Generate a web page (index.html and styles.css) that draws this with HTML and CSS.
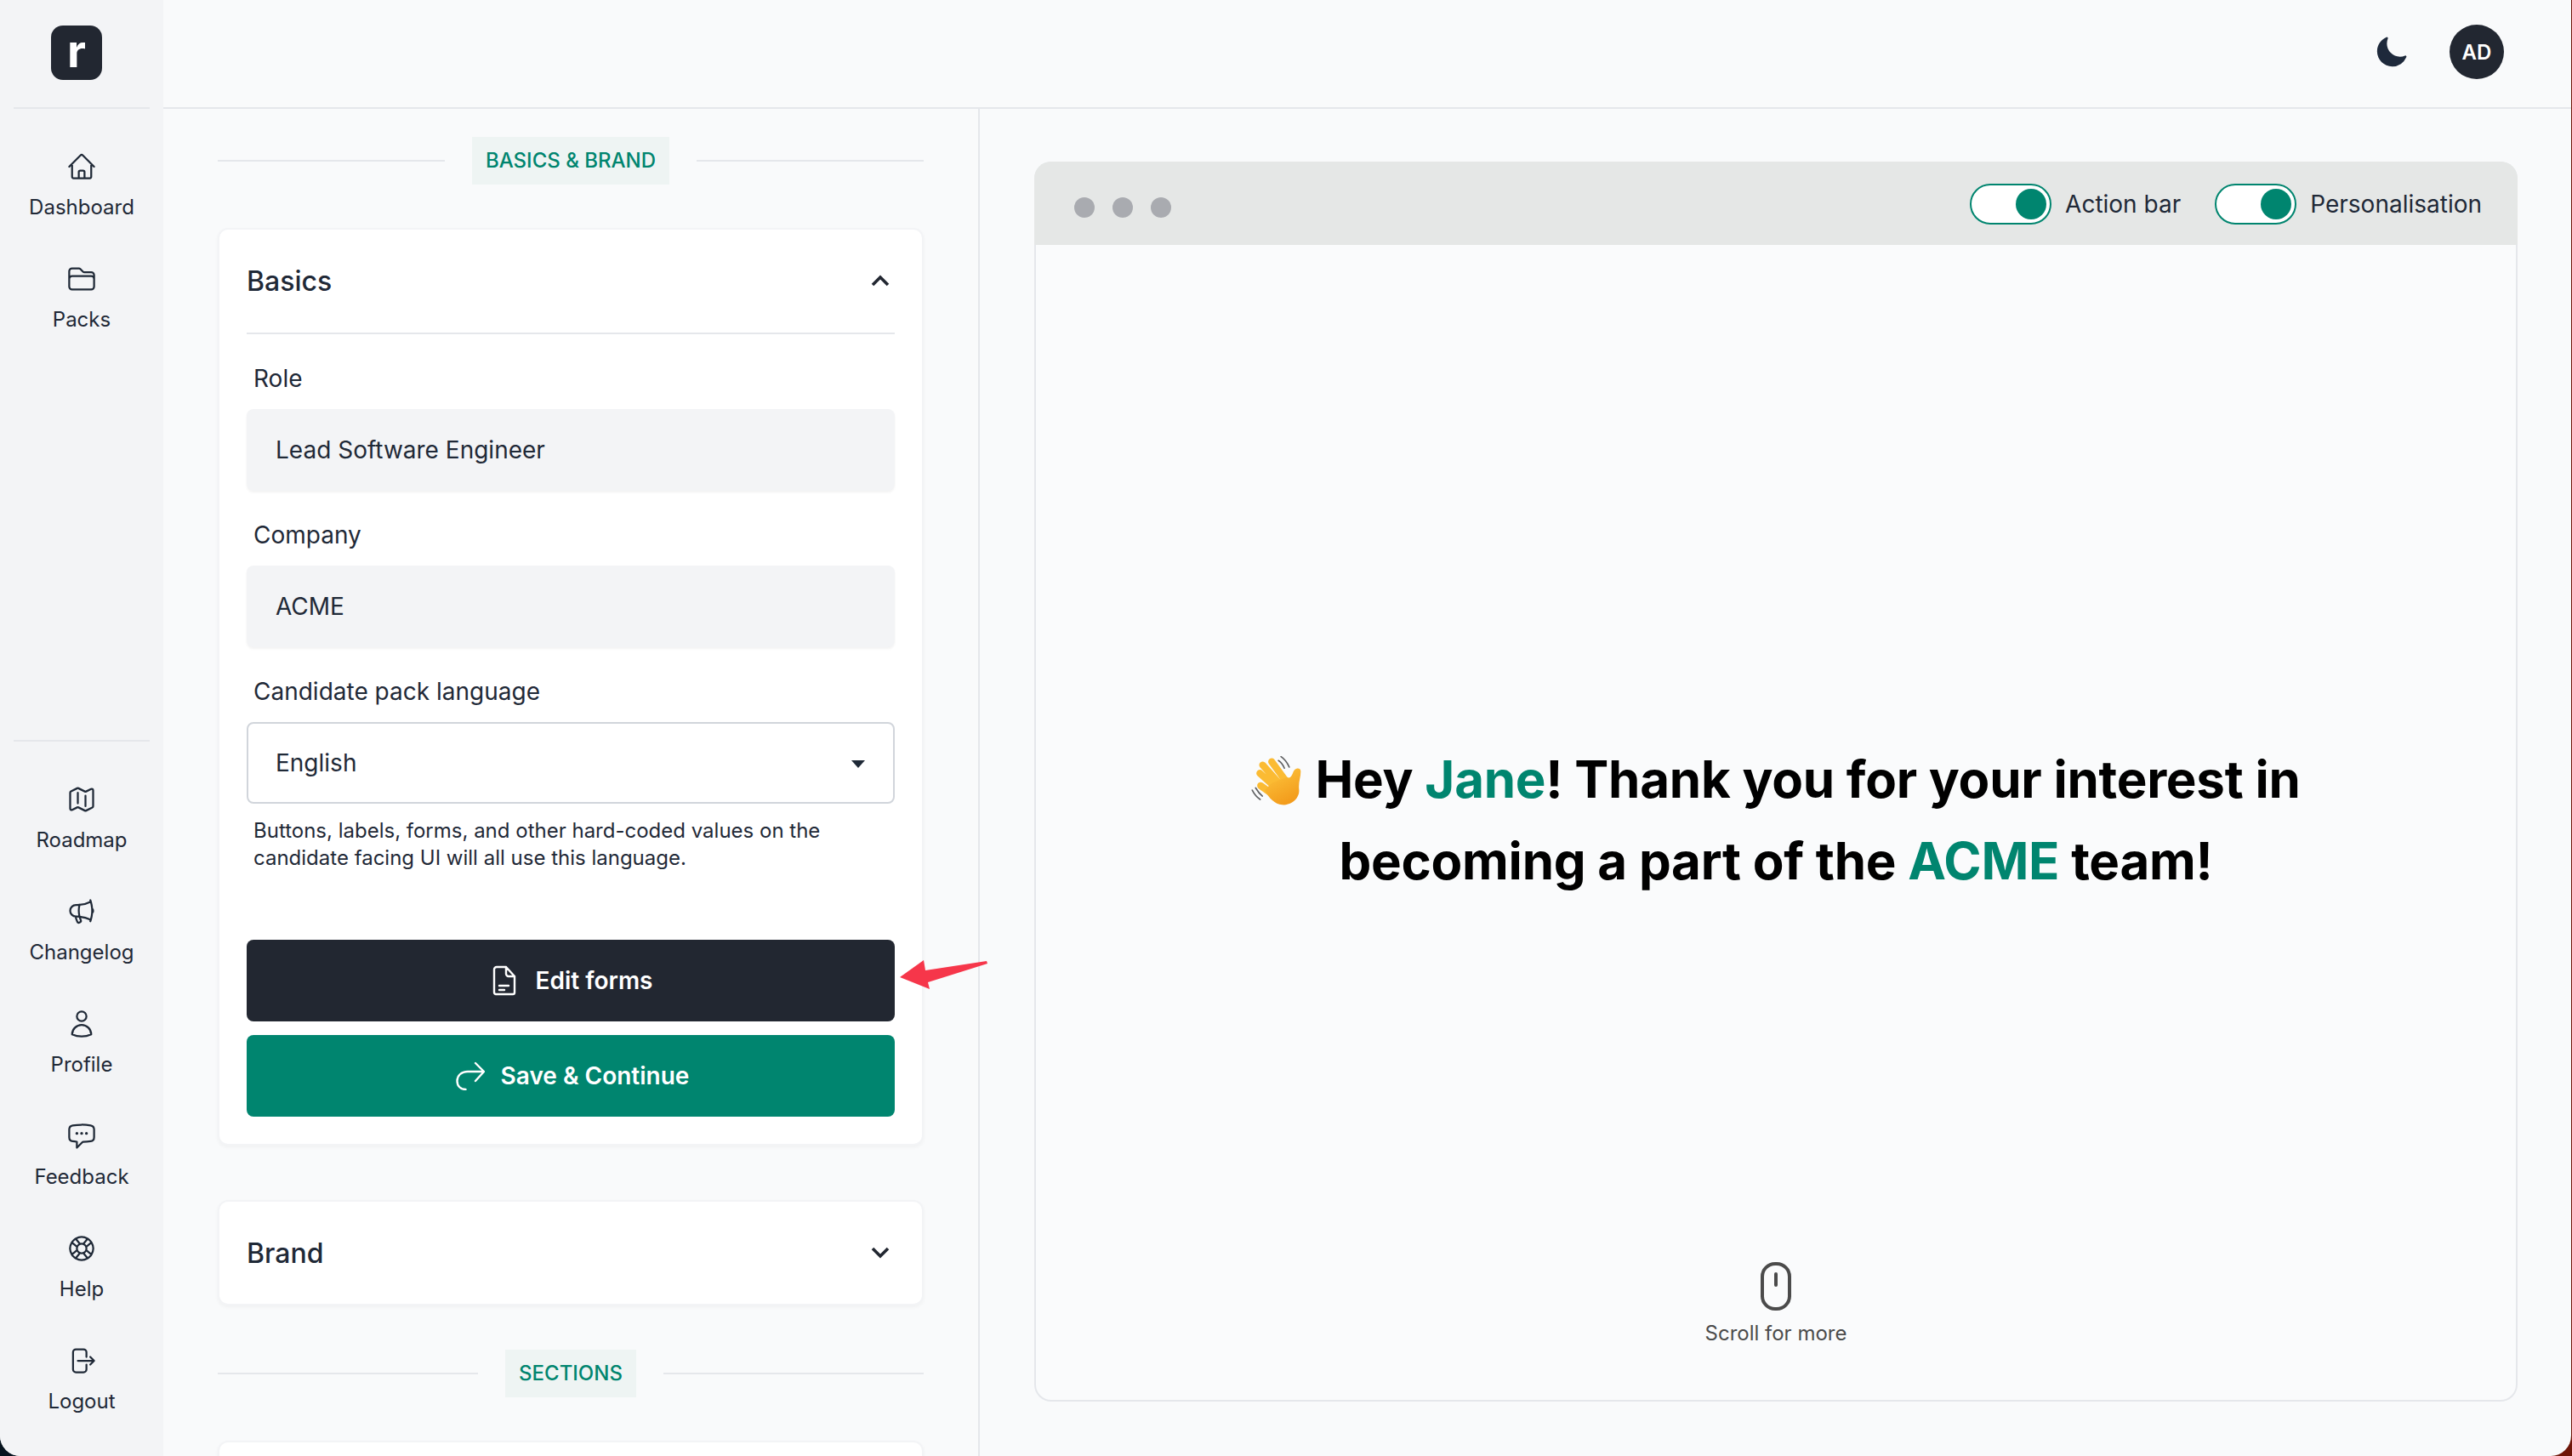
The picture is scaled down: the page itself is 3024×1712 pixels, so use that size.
FILE: index.html
```html
<!DOCTYPE html>
<html lang="en">
<head>
<meta charset="utf-8">
<title>Candidate pack</title>
<link rel="stylesheet" href="styles.css">
</head>
<body>
<div class="app">
  <aside class="sidebar">
    <div class="brand-row"><div class="logo">r</div></div>
    <nav class="nav nav-top">
      <a class="nav-item"><svg class="nav-icon" viewBox="0 0 24 24"><path d="M2.25 12l8.954-8.955c.44-.439 1.152-.439 1.591 0L21.75 12M4.5 9.75v10.125c0 .621.504 1.125 1.125 1.125H9.75v-4.875c0-.621.504-1.125 1.125-1.125h2.25c.621 0 1.125.504 1.125 1.125V21h4.125c.621 0 1.125-.504 1.125-1.125V9.75M8.25 21h8.25"/></svg><span>Dashboard</span></a>
      <a class="nav-item"><svg class="nav-icon" viewBox="0 0 24 24"><path d="M2.25 12.75V12A2.25 2.25 0 014.5 9.75h15A2.25 2.25 0 0121.75 12v.75m-8.69-6.44l-2.12-2.12a1.5 1.5 0 00-1.061-.44H4.5A2.25 2.25 0 002.25 6v12a2.25 2.25 0 002.25 2.25h15A2.25 2.25 0 0021.75 18V9a2.25 2.25 0 00-2.25-2.25h-5.379a1.5 1.5 0 01-1.06-.44z"/></svg><span>Packs</span></a>
    </nav>
    <nav class="nav nav-bottom">
      <a class="nav-item"><svg class="nav-icon" viewBox="0 0 24 24"><path d="M9 6.75V15m6-6v8.25m.503 3.498l4.875-2.437c.381-.19.622-.58.622-1.006V4.82c0-.836-.88-1.38-1.628-1.006l-3.869 1.934c-.317.159-.69.159-1.006 0L9.503 3.252a1.125 1.125 0 00-1.006 0L3.622 5.689C3.24 5.88 3 6.27 3 6.695V19.18c0 .836.88 1.38 1.628 1.006l3.869-1.934c.317-.159.69-.159 1.006 0l4.994 2.497c.317.158.69.158 1.006 0z"/></svg><span>Roadmap</span></a>
      <a class="nav-item"><svg class="nav-icon" viewBox="0 0 24 24"><path d="M10.34 15.84c-.688-.06-1.386-.09-2.09-.09H7.5a4.5 4.5 0 110-9h.75c.704 0 1.402-.03 2.09-.09m0 9.18c.253.962.584 1.892.985 2.783.247.55.06 1.21-.463 1.511l-.657.38c-.551.318-1.26.117-1.527-.461a20.845 20.845 0 01-1.44-4.282m3.102.069a18.03 18.03 0 01-.59-4.59c0-1.586.205-3.124.59-4.59m0 9.18a23.848 23.848 0 018.835 2.535M10.34 6.66a23.847 23.847 0 008.835-2.535m0 0A23.74 23.74 0 0018.795 3m.38 1.125a23.91 23.91 0 011.014 5.395m-1.014 8.855c-.118.38-.245.754-.38 1.125m.38-1.125a23.91 23.91 0 001.014-5.395m0-3.46c.495.413.811 1.035.811 1.73 0 .695-.316 1.317-.811 1.73m0-3.46a24.347 24.347 0 010 3.46"/></svg><span>Changelog</span></a>
      <a class="nav-item"><svg class="nav-icon" viewBox="0 0 24 24"><path d="M15.75 6a3.75 3.75 0 11-7.5 0 3.75 3.75 0 017.5 0zM4.501 20.118a7.5 7.5 0 0114.998 0A17.933 17.933 0 0112 21.75c-2.676 0-5.216-.584-7.499-1.632z"/></svg><span>Profile</span></a>
      <a class="nav-item"><svg class="nav-icon" viewBox="0 0 24 24"><path d="M8.625 9.75a.375.375 0 11-.75 0 .375.375 0 01.75 0zm0 0H8.25m4.125 0a.375.375 0 11-.75 0 .375.375 0 01.75 0zm0 0H12m4.125 0a.375.375 0 11-.75 0 .375.375 0 01.75 0zm0 0h-.375m-13.5 3.01c0 1.6 1.123 2.994 2.707 3.227 1.087.16 2.185.283 3.293.369V21l4.184-4.183a1.14 1.14 0 01.778-.332 48.294 48.294 0 005.83-.498c1.585-.233 2.708-1.626 2.708-3.228V6.741c0-1.602-1.123-2.995-2.707-3.228A48.394 48.394 0 0012 3c-2.392 0-4.744.175-7.043.513C3.373 3.746 2.25 5.14 2.25 6.741v6.018z"/></svg><span>Feedback</span></a>
      <a class="nav-item"><svg class="nav-icon" viewBox="0 0 24 24"><path d="M16.712 4.33a9.027 9.027 0 011.652 1.306c.51.51.944 1.064 1.306 1.652M16.712 4.33l-3.448 4.138m3.448-4.138a9.014 9.014 0 00-9.424 0M19.67 7.288l-4.138 3.448m4.138-3.448a9.014 9.014 0 010 9.424m-4.138-5.976a3.736 3.736 0 00-.88-1.388 3.737 3.737 0 00-1.388-.88m2.268 2.268a3.765 3.765 0 010 2.528m-2.268-4.796a3.765 3.765 0 00-2.528 0m4.796 4.796c-.181.506-.475.982-.88 1.388a3.736 3.736 0 01-1.388.88m2.268-2.268l4.138 3.448m0 0a9.027 9.027 0 01-1.306 1.652c-.51.51-1.064.944-1.652 1.306m0 0l-3.448-4.138m3.448 4.138a9.014 9.014 0 01-9.424 0m5.976-4.138a3.765 3.765 0 01-2.528 0m0 0a3.736 3.736 0 01-1.388-.88 3.737 3.737 0 01-.88-1.388m2.268 2.268L7.288 19.67m0 0a9.024 9.024 0 01-1.652-1.306 9.027 9.027 0 01-1.306-1.652m0 0l4.138-3.448M4.33 16.712a9.014 9.014 0 010-9.424m4.138 5.976a3.765 3.765 0 010-2.528m0 0c.181-.506.475-.982.88-1.388a3.736 3.736 0 011.388-.88m-2.268 2.268L4.33 7.288m6.406 1.18L7.288 4.33m0 0a9.024 9.024 0 00-1.652 1.306A9.025 9.025 0 004.33 7.288"/></svg><span>Help</span></a>
      <a class="nav-item"><svg class="nav-icon" viewBox="0 0 24 24"><path d="M15.75 9V5.25A2.25 2.25 0 0013.5 3h-6a2.25 2.25 0 00-2.25 2.25v13.5A2.25 2.25 0 007.5 21h6a2.25 2.25 0 002.25-2.25V15m3 0l3-3m0 0l-3-3m3 3H9"/></svg><span>Logout</span></a>
    </nav>
  </aside>

  <div class="main">
    <header class="topbar">
      <svg class="moon" viewBox="0 0 24 24"><path d="M9.528 1.718a.75.75 0 01.162.819A8.97 8.97 0 009 6a9 9 0 009 9 8.97 8.97 0 003.463-.69.75.75 0 01.981.98 10.503 10.503 0 01-9.694 6.46c-5.799 0-10.5-4.701-10.5-10.5 0-4.368 2.667-8.112 6.46-9.694a.75.75 0 01.818.162z"/></svg>
      <div class="avatar">AD</div>
    </header>

    <div class="split">
      <section class="editor">
        <div class="section-title"><span class="section-line"></span><span class="section-pill">BASICS &amp; BRAND</span><span class="section-line"></span></div>

        <div class="card">
          <div class="card-head">
            <h2>Basics</h2>
            <svg class="chevron" viewBox="0 0 24 14"><path d="M3 12L12 3l9 9"/></svg>
          </div>
          <div class="card-body">
            <div class="field">
              <div class="field-label">Role</div>
              <div class="input">Lead Software Engineer</div>
            </div>
            <div class="field">
              <div class="field-label">Company</div>
              <div class="input">ACME</div>
            </div>
            <div class="field field-select">
              <div class="field-label">Candidate pack language</div>
              <div class="select">English<span class="select-caret"></span></div>
              <p class="help">Buttons, labels, forms, and other hard-coded values on the candidate facing UI will all use this language.</p>
            </div>
            <div class="actions">
              <button class="btn btn-dark">
                <svg class="btn-icon-doc" viewBox="0 0 28 36"><path d="M5 2h11l10 11v19a2 2 0 01-2 2H4a2 2 0 01-2-2V5a3 3 0 013-3zM16 2v8a3 3 0 003 3h7M8 24h11M8 29h6"/></svg>
                <span>Edit forms</span>
              </button>
              <div class="annotation">
                <svg class="arrow" viewBox="0 0 104 34"><path d="M0 20L28 0l2 12 72-11 1 3-70 22 2 8z"/></svg>
              </div>
              <button class="btn btn-teal">
                <svg class="btn-icon-share" viewBox="0 0 34 34"><path d="M32 12H14C6 12 1.500 17 1.500 23c0 6 4 10 10 10M23 2l10 10-10 11"/></svg>
                <span>Save &amp; Continue</span>
              </button>
            </div>
          </div>
        </div>

        <div class="card card-brand">
          <div class="card-head">
            <h2>Brand</h2>
            <svg class="chevron" viewBox="0 0 24 14"><path d="M3 2l9 9 9-9"/></svg>
          </div>
        </div>

        <div class="section-title section-title-next"><span class="section-line"></span><span class="section-pill">SECTIONS</span><span class="section-line"></span></div>
        <div class="card card-stub"></div>
      </section>

      <section class="preview">
        <div class="browser">
          <div class="browser-bar">
            <div class="dots"><span class="dot"></span><span class="dot"></span><span class="dot"></span></div>
            <div class="toggles">
              <div class="toggle-row"><span class="toggle"><span class="knob"></span></span><span>Action bar</span></div>
              <div class="toggle-row"><span class="toggle"><span class="knob"></span></span><span>Personalisation</span></div>
            </div>
          </div>
          <div class="browser-body">
            <h1 class="hero"><svg class="wave" viewBox="22 15 178 175">
              <defs><linearGradient id="hand" x1="0" y1="0" x2="0.5" y2="1"><stop offset="0" stop-color="#fdc73e"/><stop offset="1" stop-color="#f39c1c"/></linearGradient></defs>
              <path class="wave-lines" d="M119 31c9 6 16 15 21 27M128 17c12 8 22 21 29 37M38 128c6 10 13 20 24 29M26 136c6 12 15 24 28 33"/>
              <g class="wave-fingers"><path d="M95 35l45 62M63 47l57 64M53 76l57 51M56 120l44 32"/></g>
              <path fill="url(#hand)" d="M96 110l54-20c10 6 16-4 22-20 5-14 26-16 26-1 0 22-9 38-6 66 3 30-29 56-60 53-26-2-46-22-62-52z"/>
            </svg><span>Hey <em>Jane</em>! Thank you for your interest in</span><br>becoming a part of the <em>ACME</em> team!</h1>
            <div class="scroll-hint">
              <svg class="mouse" viewBox="0 0 36 57"><rect x="2" y="2" width="32" height="53" rx="15"/><path d="M18 14v13"/></svg>
              <span>Scroll for more</span>
            </div>
          </div>
        </div>
      </section>
    </div>
  </div>
</div>
</body>
</html>
```

FILE: styles.css
```css
* { box-sizing: border-box; }
html, body { margin: 0; height: 100%; }
body {
  width: 3024px;
  height: 1712px;
  overflow: hidden;
  background: linear-gradient(90deg, #07141f 50%, #6e1608 50%);
  font-family: Inter, "Noto Sans", sans-serif;
  color: #1f2937;
}
.app {
  display: flex;
  width: 3023px;
  height: 1712px;
  overflow: hidden;
  background: #f9fafb;
  border-radius: 0 0 24px 24px;
}

/* sidebar */
.sidebar {
  display: flex;
  flex-direction: column;
  flex: 0 0 192px;
  background: #f3f4f6;
  padding-bottom: 48px;
}
.brand-row {
  height: 128px;
  margin: 0 16px;
  padding: 30px 0 0 44px;
  border-bottom: 2px solid #e5e7eb;
}
.logo {
  width: 60px;
  height: 64px;
  border-radius: 14px;
  background: #222731;
  color: #fff;
  font-size: 54px;
  font-weight: 700;
  line-height: 60px;
  text-align: center;
}
.nav { display: flex; flex-direction: column; gap: 50px; }
.nav-top { padding-top: 50px; }
.nav-bottom {
  margin: auto 16px 0;
  padding-top: 50px;
  border-top: 2px solid #e5e7eb;
}
.nav-item {
  display: flex;
  flex-direction: column;
  align-items: center;
  gap: 14px;
  font-size: 24px;
  line-height: 32px;
  color: #1f2937;
}
.nav-icon {
  width: 36px;
  height: 36px;
  fill: none;
  stroke: #1f2937;
  stroke-width: 1.5;
  stroke-linecap: round;
  stroke-linejoin: round;
}

/* top bar */
.main { display: flex; flex-direction: column; flex: 1; min-width: 0; }
.topbar {
  display: flex;
  align-items: center;
  justify-content: flex-end;
  gap: 48px;
  flex: 0 0 128px;
  padding: 0 79px 4px 0;
  border-bottom: 2px solid #e5e7eb;
}
.moon { width: 41px; height: 41px; fill: #1e293b; }
.avatar {
  display: flex;
  align-items: center;
  justify-content: center;
  width: 64px;
  height: 64px;
  border-radius: 50%;
  background: #222731;
  color: #fff;
  font-size: 24px;
  font-weight: 600;
}

.split { display: flex; flex: 1; min-height: 0; }

/* editor column */
.editor {
  flex: 0 0 960px;
  padding: 33px 64px 0;
  border-right: 2px solid #e5e7eb;
}
.section-title { display: flex; align-items: center; gap: 32px; margin-bottom: 51px; }
.section-title-next { margin-top: 52px; }
.section-line { flex: 1; height: 2px; background: #e5e7eb; }
.section-pill {
  padding: 0 16px;
  height: 56px;
  background: #eef4f3;
  color: #00856f;
  font-size: 24px;
  font-weight: 500;
  line-height: 56px;
  white-space: nowrap;
}
.card {
  background: #fff;
  border: 2px solid #f3f4f6;
  border-radius: 12px;
  box-shadow: 0 2px 4px rgba(0, 0, 0, .04);
  padding: 0 32px;
}
.card-brand { margin-top: 64px; }
.card-stub { height: 120px; }
.card-head {
  display: flex;
  align-items: center;
  justify-content: space-between;
  height: 120px;
  padding-right: 5px;
}
.card-head h2 { margin: 0; font-size: 32px; font-weight: 500; color: #1f2937; }
.chevron {
  width: 24px;
  height: 14px;
  fill: none;
  stroke: #222731;
  stroke-width: 3.6;
}
.card-body { border-top: 2px solid #e5e7eb; margin-top: 1px; padding: 32px 0 32px; }
.field { margin-bottom: 32px; }
.field-label { padding-left: 8px; margin-bottom: 16px; font-size: 28px; line-height: 40px; }
.input {
  height: 96px;
  padding-left: 34px;
  border-radius: 8px;
  background: #f3f4f6;
  box-shadow: 0 2px 3px rgba(0, 0, 0, .05);
  font-size: 28px;
  line-height: 96px;
}
.select {
  position: relative;
  height: 96px;
  padding-left: 32px;
  border: 2px solid #d1d5db;
  border-radius: 8px;
  background: #fff;
  font-size: 28px;
  line-height: 92px;
}
.select-caret {
  position: absolute;
  right: 33px;
  top: 43px;
  border-style: solid;
  border-width: 9px 8px 0;
  border-color: #1f2937 transparent transparent;
}
.help { margin: 16px 0 0; padding-left: 8px; font-size: 24px; line-height: 32px; }
.field-select { margin-bottom: 80px; }

.actions { position: relative; display: flex; flex-direction: column; gap: 16px; }
.btn {
  display: flex;
  align-items: center;
  justify-content: center;
  height: 96px;
  padding-left: 10px;
  border: 0;
  border-radius: 8px;
  color: #fff;
  font-family: inherit;
  font-size: 28px;
  font-weight: 600;
}
.btn-dark { gap: 23px; background: #222731; }
.btn-teal { gap: 19px; background: #00856f; }
.btn-icon-doc, .btn-icon-share { fill: none; stroke: #fff; stroke-linecap: round; stroke-linejoin: round; }
.btn-icon-doc { width: 28px; height: 36px; stroke-width: 2.4; }
.btn-icon-share { width: 34px; height: 34px; stroke-width: 2.4; }
.annotation { position: absolute; left: 768px; top: 24px; }
.arrow { display: block; width: 104px; height: 34px; fill: #f6364a; }

/* preview */
.preview { flex: 1; padding: 62px 63px 64px 64px; min-width: 0; display: flex; }
.browser {
  display: flex;
  flex-direction: column;
  flex: 1;
  border-radius: 20px;
  overflow: hidden;
  background: #fafbfc;
  box-shadow: inset 0 0 0 2px #e5e7eb;
}
.browser-bar {
  display: flex;
  align-items: center;
  justify-content: space-between;
  flex: 0 0 98px;
  padding: 1px 42px 0 47px;
  background: #e5e7e6;
}
.dots { display: flex; gap: 21px; padding-top: 9px; }
.dot { width: 24px; height: 24px; border-radius: 50%; background: #a9abb0; }
.toggles { display: flex; gap: 40px; }
.toggle-row { display: flex; align-items: center; gap: 16px; font-size: 28px; color: #1f2937; }
.toggle {
  display: flex;
  align-items: center;
  justify-content: flex-end;
  width: 96px;
  height: 48px;
  padding-right: 4px;
  border: 2px solid #00856f;
  border-radius: 24px;
  background: #fff;
}
.knob { width: 36px; height: 36px; border-radius: 50%; background: #00856f; }
.browser-body {
  position: relative;
  display: flex;
  align-items: center;
  justify-content: center;
  flex: 1;
  padding-bottom: 8px;
}
.hero {
  margin: 0;
  color: #000;
  font-size: 60px;
  font-weight: 700;
  letter-spacing: -0.25px;
  line-height: 96px;
  text-align: center;
}
.hero em { color: #00856f; font-style: normal; }
.wave { width: 59px; height: 58px; margin-right: 16px; vertical-align: -9px; }
.wave-lines { fill: none; stroke: #5f6062; stroke-width: 5; stroke-linecap: round; }
.wave-fingers path { fill: none; stroke: #fbbb33; stroke-width: 25; stroke-linecap: round; }
.scroll-hint {
  position: absolute;
  left: 0;
  right: 0;
  bottom: 64px;
  display: flex;
  flex-direction: column;
  align-items: center;
  gap: 11px;
  color: #4b4b4b;
  font-size: 24px;
  line-height: 32px;
}
.mouse { width: 36px; height: 57px; fill: none; stroke: #4b4b4b; stroke-width: 4; stroke-linecap: round; }
```
